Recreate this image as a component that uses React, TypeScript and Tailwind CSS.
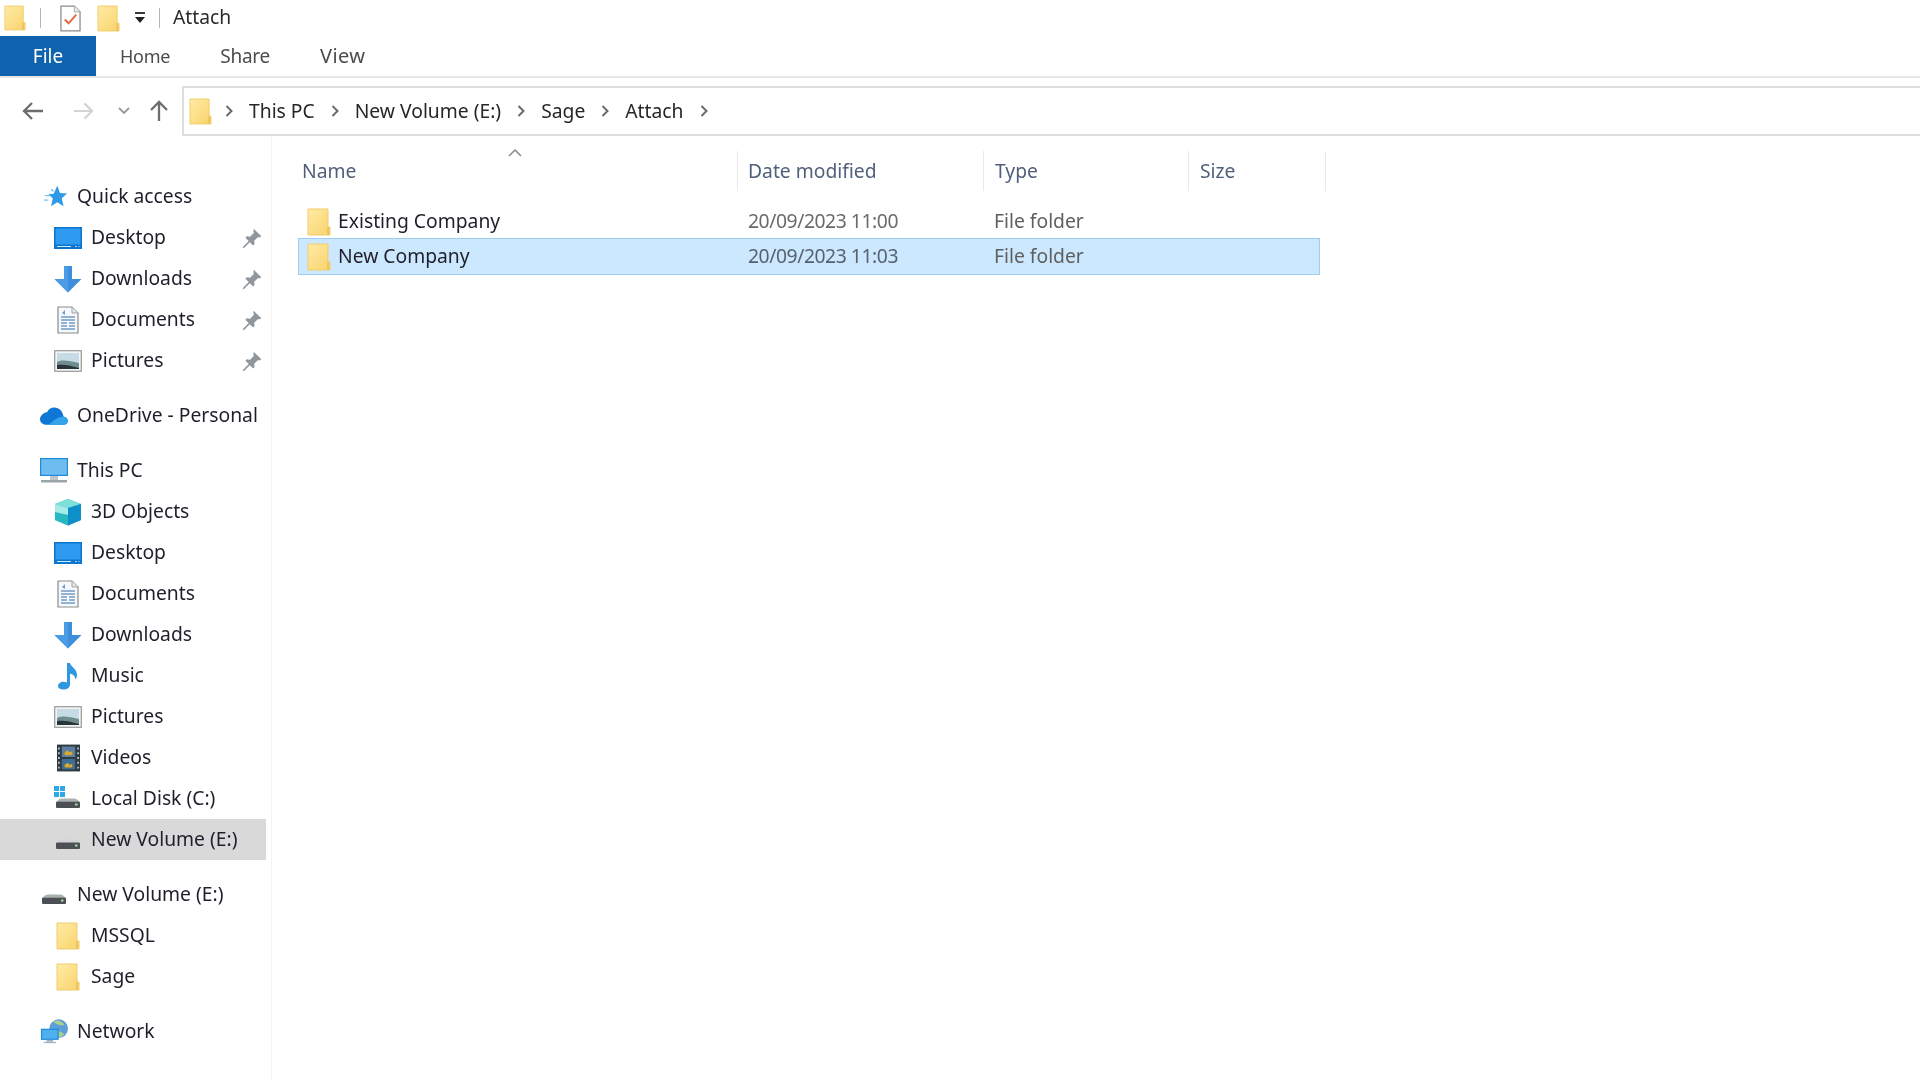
import React from "react";

const Folder = ({ className = "w-[24px] h-[28px]" }: { className?: string }) => (
  <svg viewBox="0 0 24 28" className={className}>
    <defs>
      <linearGradient id="fg" x1="0" y1="0" x2="1" y2="1">
        <stop offset="0" stopColor="#ffeba6" />
        <stop offset="1" stopColor="#f9d36b" />
      </linearGradient>
    </defs>
    <path d="M1 1h20v18h2v8H1z" fill="url(#fg)" stroke="#f0cd6c" strokeWidth="1" />
    <path d="M21 19v8" stroke="#e8bf5a" strokeWidth="1.5" />
  </svg>
);

const Pin = () => (
  <svg viewBox="0 0 20 20" className="w-[22px] h-[22px]">
    <path d="M11.5 1.5l7 7-2 1-1-.5-3.5 3.5.3 3-1.3 1.3-3-3-5.5 5.500-1-1 5.500-5.500-3-3L5.300 8.500l3 .3L11.800 5.300 11.300 4.300z" fill="#8f969c" />
  </svg>
);

const Star = () => (
  <svg viewBox="0 0 28 28" className="w-[27px] h-[27px] ml-[3px]">
    <path d="M16 2l3 8 8 .5-6 5.500 2 9-7-4.500-7 4.500 2-9-5-4.500 6-.5z" fill="#2f9be8" />
    <path d="M2 13h6M1 18h5M9 6l3 2" stroke="#7cc4f4" strokeWidth="1.500" />
  </svg>
);

const DesktopIcon = () => (
  <svg viewBox="0 0 28 22" className="w-[28px] h-[22px]">
    <rect x="0" y="0" width="28" height="22" fill="#0b76cf" />
    <rect x="1.500" y="1.500" width="25" height="16" fill="#2e9bf0" />
    <path d="M3 19.500h14M21 19.500h1.500M24.500 19.500h1" stroke="#cfe8fb" strokeWidth="1" />
  </svg>
);

const DownloadIcon = () => (
  <svg viewBox="0 0 28 28" className="w-[28px] h-[28px]">
    <path d="M10 1h8v13h9.500L14 27.500.500 14H10z" fill="#3d8fdc" />
    <path d="M10 1h4v26.500L.500 14H10z" fill="#4a9ce6" />
  </svg>
);

const DocIcon = () => (
  <svg viewBox="0 0 22 28" className="w-[22px] h-[28px]">
    <path d="M1 1h14l6 6v20H1z" fill="#f6f8fb" stroke="#8b8b8b" strokeWidth="1.200" />
    <path d="M15 1v6h6" fill="#e2e6ea" stroke="#a5a5a5" strokeWidth="1" />
    <path d="M5 7l3-3v5" fill="#6aa0d8" />
    <path d="M4 11h14M4 14h14M4 17h6M12 17h6M4 20h6M12 20h6M4 23h14" stroke="#6f9ac6" strokeWidth="1.300" />
  </svg>
);

const PictureIcon = () => (
  <svg viewBox="0 0 28 22" className="w-[28px] h-[22px]">
    <rect x=".7" y=".7" width="26.600" height="20.600" fill="#f4f4f4" stroke="#9a9a9a" strokeWidth="1.200" />
    <rect x="3" y="3" width="22" height="16" fill="#c6dbe6" />
    <path d="M3 12c6-3 12-1 22 1v6H3z" fill="#6f8c8e" />
    <path d="M3 15c6-1 12 0 22 3v1H3z" fill="#27353a" />
  </svg>
);

const OneDriveIcon = () => (
  <svg viewBox="0 0 30 20" className="w-[29px] h-[20px]">
    <path d="M8 19.500h17c3 0 4.800-2 4.800-4.500s-2-4.300-4.500-4.300C24.300 5 20.500 1 15.500 1 11.700 1 9 3 7.500 6 3.500 6.500 0 10 0 13.500 0 17 3 19.500 8 19.500z" fill="#0f78d4" />
    <path d="M8 19.500h17c3 0 4.800-2 4.800-4.500 0-2-2-4.300-5-4.300-4 0-8 2-11 5-1 1-3 3-5.800 3.800z" fill="#35a3ea" />
  </svg>
);

const PCIcon = () => (
  <svg viewBox="0 0 28 26" className="w-[28px] h-[26px]">
    <rect x="0" y="0" width="28" height="18" fill="#1f8ad6" />
    <rect x="1.200" y="1.200" width="25.600" height="15.600" fill="#6dbdf0" />
    <rect x="10" y="18" width="8" height="4" fill="#bcc6cc" />
    <rect x="1" y="22" width="26" height="2.500" fill="#9aa4ab" />
  </svg>
);

const ObjectsIcon = () => (
  <svg viewBox="0 0 28 28" className="w-[28px] h-[28px]">
    <path d="M14 1l13 5v16l-13 5.500L1 22V6z" fill="#2fa7d8" />
    <path d="M1 6l13-5 13 5-13 4z" fill="#7de0d8" />
    <path d="M1 6l13 4v17.500L1 22z" fill="#a5ebe6" />
    <path d="M1 14l13 3v10.500L1 22z" fill="#27b9c2" />
    <path d="M14 10l13-4v16l-13 5.500z" fill="#0f8fc9" />
  </svg>
);

const MusicIcon = () => (
  <svg viewBox="0 0 22 28" className="w-[22px] h-[28px]">
    <path d="M10 1h3c1 4 7 6 7 12 0 2-.5 3-1.500 4.500 0-3-2-5-5.500-6v11c0 3-3 5-6.500 5S1 26 1 24c0-3 4.500-5.500 9-3.500z" fill="#2f96e0" />
  </svg>
);

const VideoIcon = () => (
  <svg viewBox="0 0 24 28" className="w-[23px] h-[28px]">
    <rect x="0" y="0" width="24" height="28" fill="#2e3a42" />
    <rect x="5" y="2" width="14" height="11" fill="#5b7ea3" />
    <rect x="5" y="15" width="14" height="11" fill="#3f6c92" />
    <path d="M8 8l3-2 2 2 3-1v4H8zM8 21l3-2 2 2 3-1v4H8z" fill="#d9a92e" />
    <path d="M2 3v2M2 8v2M2 13v2M2 18v2M2 23v2M22 3v2M22 8v2M22 13v2M22 18v2M22 23v2" stroke="#cfd6da" strokeWidth="1.600" />
  </svg>
);

const DriveBody = ({ dome = "#aab4ae" }: { dome?: string }) => (
  <>
    <path d="M3 15.500c1-2 3-3 5-3h12c2 0 4 1 5 3z" fill={dome} />
    <rect x="2" y="15.500" width="24" height="6.500" rx="1" fill="#4c5054" />
    <rect x="21" y="17.500" width="2.500" height="2" fill="#9fdc9f" />
  </>
);

const LocalDiskIcon = () => (
  <svg viewBox="0 0 28 26" className="w-[28px] h-[26px]">
    <rect x="0" y="0" width="5" height="5" fill="#2ea8e6" />
    <rect x="6" y="0" width="5" height="5" fill="#2ea8e6" />
    <rect x="0" y="6" width="5" height="5" fill="#2ea8e6" />
    <rect x="6" y="6" width="5" height="5" fill="#2ea8e6" />
    <DriveBody />
  </svg>
);

const DriveIcon = ({ dome }: { dome?: string }) => (
  <svg viewBox="0 0 28 26" className="w-[28px] h-[26px]">
    <DriveBody dome={dome} />
  </svg>
);

const NetworkIcon = () => (
  <svg viewBox="0 0 30 28" className="w-[28px] h-[27px]">
    <circle cx="20" cy="11" r="10" fill="#5c9fd9" />
    <path d="M14 3c5-2 10 0 12 4-4 1-9 0-12-4zM13 14c5-2 10 0 13 3-3 4-10 5-13-3z" fill="#a9d08c" />
    <rect x="1" y="11" width="19" height="12" fill="#1f8ad6" />
    <rect x="2.300" y="12.300" width="16.400" height="9.400" fill="#4fb0ef" />
    <rect x="7" y="23" width="7" height="2" fill="#9fb4c4" />
    <rect x="4" y="25" width="13" height="1.500" fill="#9fb4c4" />
  </svg>
);

const Chevron = () => (
  <svg viewBox="0 0 8 12" className="w-[8px] h-[12px] shrink-0">
    <path d="M1.500 1l5 5-5 5" fill="none" stroke="#6b6b6b" strokeWidth="2" />
  </svg>
);

type Item = { label: string; icon: React.ReactNode; pin?: boolean; active?: boolean };

const TopRow = ({ icon, label }: { icon: React.ReactNode; label: string }) => (
  <div className="h-[41px] flex items-center pl-[40px] text-[#1f1f2a]">
    <span className="w-[28px] h-[28px] flex items-center justify-center shrink-0">{icon}</span>
    <span className="ml-[9px] whitespace-nowrap">{label}</span>
  </div>
);

const ChildRow = ({ icon, label, pin, active }: Item) => (
  <div className={`h-[41px] flex items-center pl-[54px] text-[#1f1f2a] ${active ? "bg-[#d9d9d9]" : ""}`}>
    <span className="w-[28px] h-[28px] flex items-center justify-center shrink-0">{icon}</span>
    <span className="ml-[9px] whitespace-nowrap">{label}</span>
    {pin && (
      <span className="ml-auto mr-[3px]">
        <Pin />
      </span>
    )}
  </div>
);

const Row = ({ name, date, selected }: { name: string; date: string; selected?: boolean }) => (
  <div
    className={`w-[1022px] flex items-center border ${
      selected ? "h-[37px] bg-[#cce8ff] border-[#9fcdee]" : "h-[33px] border-transparent"
    }`}
  >
    <span className="w-[39px] pl-[8px] shrink-0 flex items-center">
      <Folder />
    </span>
    <span className="w-[410px] shrink-0 text-[#1f1f2a] whitespace-nowrap">{name}</span>
    <span className={`w-[246px] shrink-0 whitespace-nowrap tracking-[-0.43px] ${selected ? "text-[#56626e]" : "text-[#6a6a6a]"}`}>{date}</span>
    <span className="text-[#5f5f5f] whitespace-nowrap">File folder</span>
  </div>
);

const Head = ({ label, w, pad }: { label: string; w: string; pad: string }) => (
  <div className={`${w} ${pad} h-[40px] flex items-center border-r border-[#e9e9e9] text-[#51607a] shrink-0`}>{label}</div>
);

export default function App() {
  return (
    <div className="w-[1920px] h-[1080px] overflow-hidden bg-white font-['Noto_Sans','Open_Sans',sans-serif] text-[19.3px] text-[#1f1f2a] blur-[0.4px]">
      {/* title bar */}
      <div className="h-[36px] flex items-center pl-[4px]">
        <Folder className="w-[22px] h-[26px]" />
        <span className="ml-[14px] w-px h-[20px] bg-[#b5b5b5]" />
        <svg viewBox="0 0 22 28" className="ml-[19px] w-[21px] h-[27px]">
          <path d="M1 1h14l6 6v20H1z" fill="#fff" stroke="#8b8b8b" strokeWidth="1.300" />
          <path d="M15 1v6h6" fill="#eee" stroke="#a5a5a5" />
          <path d="M5 15l4 4 8-9" fill="none" stroke="#e2683c" strokeWidth="2" />
        </svg>
        <span className="ml-[16px]">
          <Folder className="w-[23px] h-[27px]" />
        </span>
        <svg viewBox="0 0 14 14" className="ml-[13px] w-[14px] h-[14px]">
          <path d="M2 2h10" stroke="#222" strokeWidth="1.800" />
          <path d="M2 6h10l-5 6z" fill="#222" />
        </svg>
        <span className="ml-[12px] w-px h-[20px] bg-[#b5b5b5]" />
        <span className="ml-[13px] mb-[2px] text-[#2a2a2a]">Attach</span>
      </div>

      {/* ribbon tabs */}
      <div className="h-[40px] flex items-stretch border-b-2 border-[#e6e6e6] text-[#4c4c4c] text-[18px] tracking-[-0.25px] box-content">
        <div className="w-[96px] bg-[#0f62ad] text-white flex items-center justify-center text-[19px] tracking-normal">File</div>
        <div className="ml-[24px] flex items-center">Home</div>
        <div className="ml-[50px] flex items-center text-[19px]">Share</div>
        <div className="ml-[50px] flex items-center text-[20px] tracking-[0.4px]">View</div>
      </div>

      {/* navigation */}
      <div className="h-[50px] mt-[8px] flex items-center">
        <svg viewBox="0 0 22 20" className="ml-[22px] w-[22px] h-[20px]">
          <path d="M21 10H3M10 2l-8 8 8 8" fill="none" stroke="#6d6d6d" strokeWidth="2.300" />
        </svg>
        <svg viewBox="0 0 22 20" className="ml-[29px] w-[21px] h-[20px]">
          <path d="M1 10h18M12 2l8 8-8 8" fill="none" stroke="#d4d4d4" strokeWidth="2.300" />
        </svg>
        <svg viewBox="0 0 12 8" className="ml-[24px] w-[12px] h-[8px]">
          <path d="M1 1l5 5 5-5" fill="none" stroke="#9a9a9a" strokeWidth="1.800" />
        </svg>
        <svg viewBox="0 0 20 22" className="ml-[19px] w-[20px] h-[22px]">
          <path d="M10 21V3M2 10l8-8 8 8" fill="none" stroke="#6d6d6d" strokeWidth="2.300" />
        </svg>
        <div className="ml-[13px] flex-1 h-[50px] border-2 border-r-0 border-[#dedede] flex items-center pl-[5px] gap-[16px] text-[#262626]">
          <span className="mr-[-3px] flex items-center">
            <Folder className="w-[23px] h-[27px]" />
          </span>
          <Chevron />
          <span>This PC</span>
          <Chevron />
          <span>New Volume (E:)</span>
          <Chevron />
          <span>Sage</span>
          <Chevron />
          <span>Attach</span>
          <Chevron />
        </div>
      </div>

      {/* body */}
      <div className="flex h-[944px]">
        <div className="w-[272px] shrink-0 pr-[5px] border-r border-[#f3f3f3] pt-[40px]">
          <TopRow icon={<Star />} label="Quick access" />
          <ChildRow icon={<DesktopIcon />} label="Desktop" pin />
          <ChildRow icon={<DownloadIcon />} label="Downloads" pin />
          <ChildRow icon={<DocIcon />} label="Documents" pin />
          <ChildRow icon={<PictureIcon />} label="Pictures" pin />
          <div className="h-[14px]" />
          <TopRow icon={<OneDriveIcon />} label="OneDrive - Personal" />
          <div className="h-[14px]" />
          <TopRow icon={<PCIcon />} label="This PC" />
          <ChildRow icon={<ObjectsIcon />} label="3D Objects" />
          <ChildRow icon={<DesktopIcon />} label="Desktop" />
          <ChildRow icon={<DocIcon />} label="Documents" />
          <ChildRow icon={<DownloadIcon />} label="Downloads" />
          <ChildRow icon={<MusicIcon />} label="Music" />
          <ChildRow icon={<PictureIcon />} label="Pictures" />
          <ChildRow icon={<VideoIcon />} label="Videos" />
          <ChildRow icon={<LocalDiskIcon />} label="Local Disk (C:)" />
          <ChildRow icon={<DriveIcon dome="#d4d4d4" />} label="New Volume (E:)" active />
          <div className="h-[14px]" />
          <TopRow icon={<DriveIcon />} label="New Volume (E:)" />
          <ChildRow icon={<Folder />} label="MSSQL" />
          <ChildRow icon={<Folder />} label="Sage" />
          <div className="h-[14px]" />
          <TopRow icon={<NetworkIcon />} label="Network" />
        </div>

        <div className="relative pl-[26px] pt-[15px]">
          <svg viewBox="0 0 14 8" className="absolute left-[236px] top-[13px] w-[14px] h-[8px]">
            <path d="M1 7l6-6 6 6" fill="none" stroke="#8a8a8a" strokeWidth="1.500" />
          </svg>
          <div className="flex">
            <Head label="Name" w="w-[440px]" pad="pl-[4px]" />
            <Head label="Date modified" w="w-[246px]" pad="pl-[10px]" />
            <Head label="Type" w="w-[205px]" pad="pl-[11px]" />
            <Head label="Size" w="w-[137px]" pad="pl-[11px]" />
          </div>
          <div className="mt-[14px]">
            <Row name="Existing Company" date="20/09/2023 11:00" />
            <Row name="New Company" date="20/09/2023 11:03" selected />
          </div>
        </div>
      </div>
    </div>
  );
}
